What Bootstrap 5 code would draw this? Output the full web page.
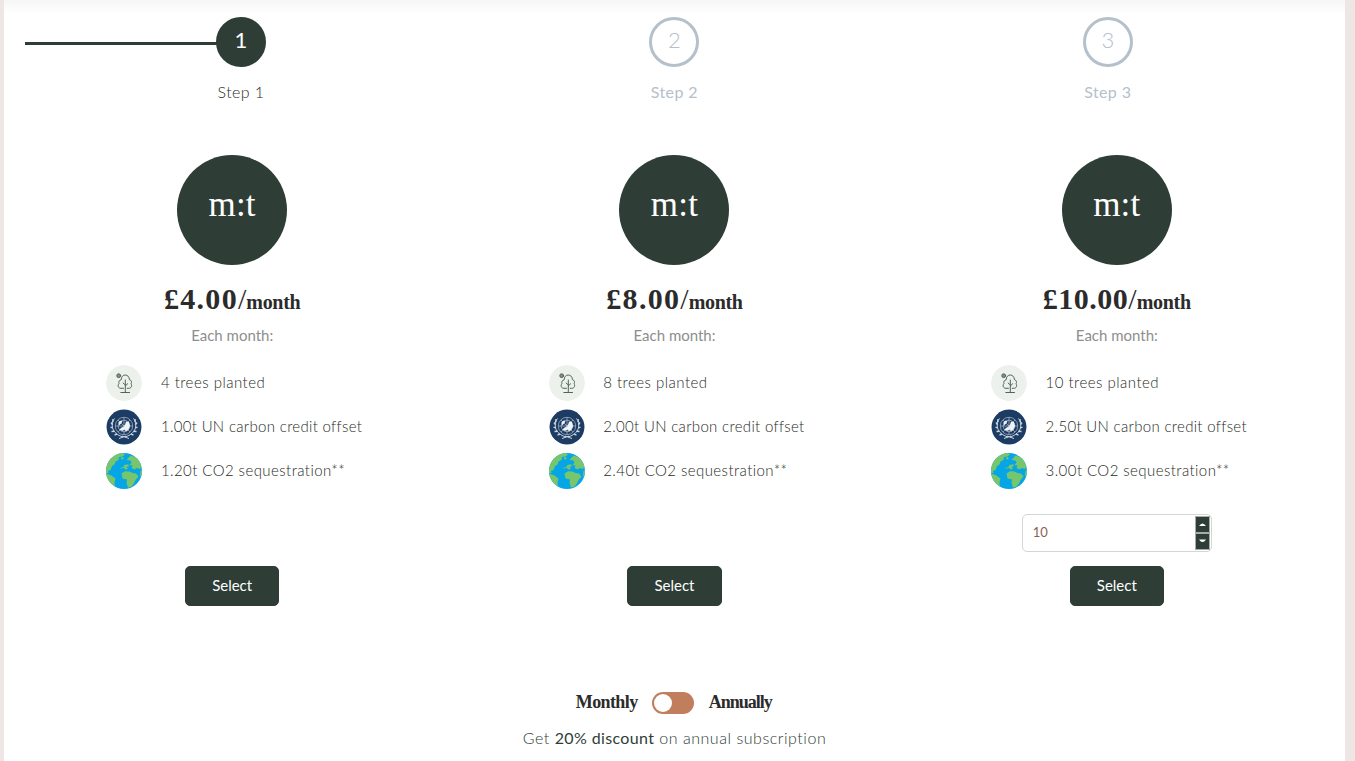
<!DOCTYPE html>
<html lang="en">
<head>
<meta charset="utf-8">
<meta name="viewport" content="width=device-width, initial-scale=1">
<title>Choose your plan</title>
<link href="https://cdn.jsdelivr.net/npm/bootstrap@5.3.0/dist/css/bootstrap.min.css" rel="stylesheet">
<style>
:root{--forest:#2e3e37;--steel:#b5c0cb;--clay:#c17e5d}
body{background:#ede6e4;font-family:Lato,"Liberation Sans",sans-serif;font-weight:300;color:var(--forest);overflow:hidden}
.sheet{margin:0 10px 0 4px;height:761px;background:linear-gradient(#f6f6f6,#fff 14px)}
.steps{margin:0 20.500px 0 20.300px;padding-top:17px}
.step-dot{width:50px;height:50px;border:3px solid var(--steel);color:var(--steel);font-size:22px;line-height:1;padding-bottom:4px}
.step-name{font-size:16px;line-height:24px;margin-top:13px;color:var(--steel);letter-spacing:.4px;font-weight:400}
.step-on .step-dot{background:var(--forest);border-color:var(--forest);color:#fff;font-weight:400}
.step-on .step-name{color:#1f2c26;font-weight:300}
.step-on::before{content:"";position:absolute;left:.7px;top:25px;width:50%;height:3px;background:var(--forest)}
.plans{margin:51px 7px 0}
.plan{height:451px}
.logo-disc{width:110px;height:110px;background:var(--forest);color:#fff;font:35px/1 "Liberation Serif",serif;padding-bottom:12px;letter-spacing:.2px}
.price{font-family:"Liberation Serif",serif;font-weight:700;font-size:30px;line-height:40px;height:40px;margin-top:14px;color:#2b2b2b;white-space:nowrap}
.amount{letter-spacing:1.300px}
.amount-long{letter-spacing:.5px}
.per{font-weight:400}
.price small{font-size:20px;letter-spacing:-.3px}
.each{font-size:15px;line-height:20px;margin-top:6px;color:#8e8e8e;font-weight:400}
.perks{width:251.500px;margin:20px 0 0;gap:8px}
.perks li{height:36px;gap:18.500px;font-size:15px;white-space:nowrap}
.perks span{letter-spacing:.320px;padding-bottom:2px;color:#1f2c26}
.perks .p1{letter-spacing:.480px}
.perks .p3{letter-spacing:.430px}
.perks svg{width:36px;height:36px;flex:none;border-radius:50%}
.qty-slot{height:38px;margin-top:25px;width:190px}
.qty{border:1px solid #d5d5d5;border-radius:5px;height:38px;padding:0 0 0 10px;font-size:13px;color:#8a5f56;font-weight:400}
.btn-pick{--bs-btn-bg:var(--forest);--bs-btn-color:#fff;--bs-btn-border-color:var(--forest);width:94.600px;height:40px;border-radius:5px;font-size:15px;line-height:24px;margin-top:14px;padding:6px 0 8px}
.cycle{margin:85px 1.500px 0 0;height:24px;font:700 18px/24px "Liberation Serif",serif;color:#2b2b2b}
.cycle-name{width:62px;letter-spacing:-.6px;padding-bottom:3px}
.cycle-year{width:63px;letter-spacing:-1px}
.toggle-pill{width:42px;height:22px;border-radius:11px;background:var(--clay);padding:2px;margin:0 15px 0 14px}
.toggle-pill span{width:18px;height:18px;background:#fff}
.offer{font-size:16px;line-height:24px;margin-top:11px;letter-spacing:.530px}
.offer strong{letter-spacing:.370px}
</style>
</head>
<body>
<svg class="d-none" xmlns="http://www.w3.org/2000/svg">
  <symbol id="tree" viewBox="0 0 36 36">
    <circle cx="18" cy="18" r="18" fill="#ecf1ec"/>
    <g fill="none" stroke="#52635a" stroke-width="1" stroke-linecap="round" stroke-linejoin="round">
      <circle cx="12.700" cy="10.700" r="1.900" fill="#84918a"/>
      <path d="M17.500 23.300h-2.500c-2.700 0-3.800-2.800-2-4.600-.8-2 .3-3.500 2.200-3.900 0-2.900 1.700-4.800 4-4.800s4.200 1.900 4.200 4.600c2 .6 2.700 2.500 1.600 4.200 1.500 2 .3 4.500-2.300 4.500h-1.500M19.300 15v12.300M19.300 21l2.400-2.300M19.300 20l-2.200-2M14.800 27.500h8.700"/>
    </g>
  </symbol>
  <symbol id="un" viewBox="0 0 36 36">
    <circle cx="18" cy="18" r="17.500" fill="#1c3c64"/>
    <g fill="none" stroke="#cbd4df" stroke-width=".6">
      <circle cx="18" cy="17" r="8.700"/><circle cx="18" cy="17" r="5.800"/>
      <path d="M9.500 17h17M18 8.500v17M12 11l12 12M24 11L12 23"/>
      <path d="M8.500 9.500C4.500 15 5 24.500 17 28M27.500 9.500C31.500 15 31 24.500 19 28M13 29.500l7-2.500M23 29.500L16 27" stroke-width="1"/>
      <path d="M7 10l-.3 3M5 13.500l1.700 2.200M4.500 18l2.300 1.200M5.500 22.500l3-.3M8.500 26.200l2.800-1.400M29 10l.3 3M31 13.500l-1.700 2.200M31.500 18l-2.300 1.200M30.500 22.500l-3-.3M27.500 26.200l-2.800-1.400" stroke-width="1.400"/>
    </g>
    <path d="M12.500 13l2.500-1.500 1.500 1-1.500 2-2 2zM20 12.500l3 .5 1 4-1.500 3.500-2.500 2-1.500-2-2.500 1.500-2.500-1.500 2-2 2.500-.5 1-2z" fill="#f1f4f7"/>
  </symbol>
  <symbol id="earth" viewBox="0 0 36 36">
    <path fill="#05a5e6" d="M0 0h36v36H0z"/>
    <g fill="#77c66e">
      <path d="M0 5L7 0h10l2 1.500-2.500 2L13 4l-.5 3-3 1.500-1 3L6 13l-1.500 4L2 18l.5 2L0 20z"/>
      <path d="M0 20.500l5 1.700 4.500 3.300-1 4 .5 5.500H0zM14 15l3.500-1 .7-2 4-.8.8 2-2.500.8 1.500 2-2.500.5-1.500-1.500-4 .5zM20.500 7l4-4.500L32 5l4 7-2 4-3.500-1-1.500 1.500-3.500-1.500 1-2.500-3-.5 2-2.500-1-2z"/>
      <path d="M15.500 20.500l3.500-2.300 4.500.3 3 1.500 3.500.5 2.500 3-3 3.500-1.500 3.500-3 3.500-3 .5-1.500-4.500.5-3.500-4.500-1zM34.500 17.500H36V26l-2-4zM14.500 5l2-1 1.500 1.300-2 1.500z"/>
    </g>
  </symbol>
</svg>
<main class="sheet">
  <div class="steps d-flex text-center">
    <div class="step-on col-4 position-relative d-flex flex-column align-items-center">
      <div class="step-dot position-relative rounded-circle d-flex align-items-center justify-content-center">1</div><div class="step-name">Step 1</div>
    </div>
    <div class="col-4 d-flex flex-column align-items-center">
      <div class="step-dot rounded-circle d-flex align-items-center justify-content-center">2</div><div class="step-name">Step 2</div>
    </div>
    <div class="col-4 d-flex flex-column align-items-center">
      <div class="step-dot rounded-circle d-flex align-items-center justify-content-center">3</div><div class="step-name">Step 3</div>
    </div>
  </div>
  <div class="plans d-flex">
    <section class="plan col-4 d-flex flex-column align-items-center">
      <div class="logo-disc rounded-circle d-flex align-items-center justify-content-center">m:t</div>
      <div class="price"><span class="amount">£4.00</span><span class="per">/</span><small>month</small></div>
      <div class="each">Each month:</div>
      <ul class="perks list-unstyled d-flex flex-column">
        <li class="d-flex align-items-center"><svg><use href="#tree"/></svg><span class="p1">4 trees planted</span></li>
        <li class="d-flex align-items-center"><svg><use href="#un"/></svg><span>1.00t UN carbon credit offset</span></li>
        <li class="d-flex align-items-center"><svg><use href="#earth"/></svg><span class="p3">1.20t CO2 sequestration**</span></li>
      </ul>
      <div class="qty-slot"></div>
      <button class="btn btn-pick">Select</button>
    </section>
    <section class="plan col-4 d-flex flex-column align-items-center">
      <div class="logo-disc rounded-circle d-flex align-items-center justify-content-center">m:t</div>
      <div class="price"><span class="amount">£8.00</span><span class="per">/</span><small>month</small></div>
      <div class="each">Each month:</div>
      <ul class="perks list-unstyled d-flex flex-column">
        <li class="d-flex align-items-center"><svg><use href="#tree"/></svg><span class="p1">8 trees planted</span></li>
        <li class="d-flex align-items-center"><svg><use href="#un"/></svg><span>2.00t UN carbon credit offset</span></li>
        <li class="d-flex align-items-center"><svg><use href="#earth"/></svg><span class="p3">2.40t CO2 sequestration**</span></li>
      </ul>
      <div class="qty-slot"></div>
      <button class="btn btn-pick">Select</button>
    </section>
    <section class="plan col-4 d-flex flex-column align-items-center">
      <div class="logo-disc rounded-circle d-flex align-items-center justify-content-center">m:t</div>
      <div class="price"><span class="amount-long">£10.00</span><span class="per">/</span><small>month</small></div>
      <div class="each">Each month:</div>
      <ul class="perks list-unstyled d-flex flex-column">
        <li class="d-flex align-items-center"><svg><use href="#tree"/></svg><span class="p1">10 trees planted</span></li>
        <li class="d-flex align-items-center"><svg><use href="#un"/></svg><span>2.50t UN carbon credit offset</span></li>
        <li class="d-flex align-items-center"><svg><use href="#earth"/></svg><span class="p3">3.00t CO2 sequestration**</span></li>
      </ul>
      <div class="qty-slot"><div class="qty d-flex align-items-center justify-content-between"><span>10</span>
        <svg width="16" height="34" viewBox="0 0 16 34"><path fill="#a5aba8" d="M0 0h15v34H0z"/><path fill="#2e3e37" d="M1 1h13v15H1zM1 18h13v15H1z"/><path fill="#fff" d="M4 10q3.500-5 7 0zM4 23.500h7q-3.500 5-7 0z"/></svg></div></div>
      <button class="btn btn-pick">Select</button>
    </section>
  </div>
  <div class="cycle d-flex justify-content-center align-items-center"><span class="cycle-name text-nowrap">Monthly</span>
    <div class="toggle-pill"><span class="d-block rounded-circle"></span></div><span class="cycle-name cycle-year text-nowrap">Annually</span></div>
  <div class="offer text-center">Get <strong>20% discount</strong> on annual subscription</div>
</main>
<script src="https://cdn.jsdelivr.net/npm/bootstrap@5.3.0/dist/js/bootstrap.bundle.min.js"></script>
</body>
</html>
